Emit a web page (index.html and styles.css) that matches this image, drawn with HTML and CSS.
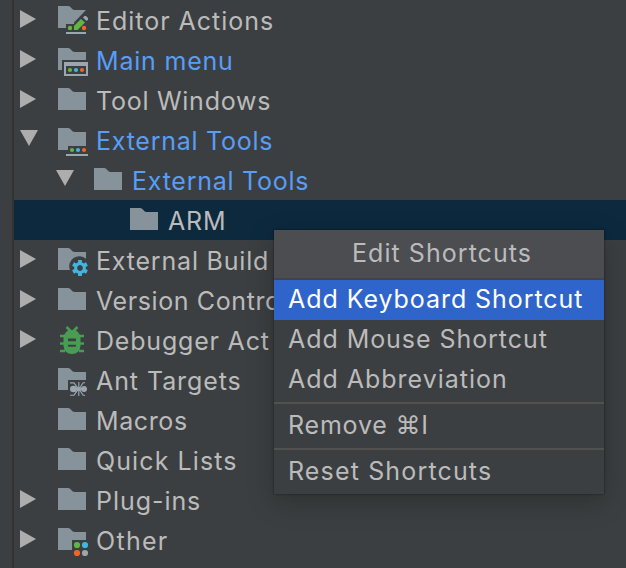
FILE: index.html
```html
<!DOCTYPE html>
<html lang="en">
<head>
<meta charset="utf-8">
<title>Keymap</title>
<link rel="stylesheet" href="styles.css">
</head>
<body>
<svg class="defs" width="0" height="0">
  <symbol id="folder" viewBox="0 0 36 36"><path fill="#87939a" d="M2 4H12Q14 4 15.5 6.3Q16.6 8 18.5 8H30V26H2Z"/></symbol>
  <symbol id="right" viewBox="0 0 18 18"><path fill="#adadad" d="M0 0L16 9L0 18Z"/></symbol>
  <symbol id="down" viewBox="0 0 18 18"><path fill="#adadad" d="M0 0H18L9 16Z"/></symbol>
</svg>
<main class="tree">
  <div class="row"><svg class="arrow"><use href="#right"/></svg>
    <svg class="icon" viewBox="0 0 36 36"><path fill="#87939a" d="M2 2H12Q14 2 15.5 4.3Q16.6 6 18.5 6H30L18 18.500V20H10V24H2Z"/><path fill="#62b543" d="M18 22L25 15L29 18.500L21.500 26H18Z"/><path fill="#9aa7b0" d="M27 13.500L28.500 12H30L32 14V15.500L30.500 17Z"/><circle cx="14" cy="24" r="2.200" fill="#62b543"/><circle cx="28" cy="24" r="2.200" fill="#f26522"/><path fill="#9aa7b0" d="M10 28h20v2H10z"/></svg>
    <span class="label t0">Editor Actions</span></div>
  <div class="row"><svg class="arrow"><use href="#right"/></svg>
    <svg class="icon" viewBox="0 0 36 36"><path fill="#87939a" d="M2 4H12Q14 4 15.5 6.3Q16.6 8 18.5 8H30V16H6V26H2Z"/><path fill="#9aa7b0" fill-rule="evenodd" d="M8 18H32V32H8ZM10 22V30H30V22Z"/><circle cx="14" cy="26" r="2.100" fill="#62b543"/><circle cx="20" cy="26" r="2.100" fill="#40b6e0"/><circle cx="26" cy="26" r="2.100" fill="#f26522"/></svg>
    <span class="label changed t1">Main menu</span></div>
  <div class="row"><svg class="arrow"><use href="#right"/></svg><svg class="icon"><use href="#folder"/></svg><span class="label t2">Tool Windows</span></div>
  <div class="row"><svg class="arrow"><use href="#down"/></svg>
    <svg class="icon" viewBox="0 0 36 36"><path fill="#87939a" d="M2 4H12Q14 4 15.5 6.3Q16.6 8 18.5 8H30V22H12V26H2Z"/><circle cx="16" cy="26" r="2.100" fill="#62b543"/><circle cx="22" cy="26" r="2.100" fill="#40b6e0"/><circle cx="28" cy="26" r="2.100" fill="#f26522"/><path fill="#9aa7b0" d="M10 30h22v2H10z"/></svg>
    <span class="label changed t3">External Tools</span></div>
  <div class="row level-1"><svg class="arrow"><use href="#down"/></svg><svg class="icon"><use href="#folder"/></svg><span class="label changed t3">External Tools</span></div>
  <div class="row level-2 selected"><span class="arrow"></span><svg class="icon"><use href="#folder"/></svg><span class="label t5">ARM</span></div>
  <div class="row"><svg class="arrow"><use href="#right"/></svg>
    <svg class="icon" viewBox="0 0 36 36"><path fill="#87939a" d="M2 4H12Q14 4 15.5 6.3Q16.6 8 18.5 8H30V14.800A10 10 0 0 0 14 26H2Z"/><g transform="translate(24 24)" fill="#40b6e0"><circle r="4.400" fill="none" stroke="#40b6e0" stroke-width="3"/><path id="tooth" d="M-1.900 -8H1.900V-5H-1.900Z"/><use href="#tooth" transform="rotate(60)"/><use href="#tooth" transform="rotate(120)"/><use href="#tooth" transform="rotate(180)"/><use href="#tooth" transform="rotate(240)"/><use href="#tooth" transform="rotate(300)"/></g></svg>
    <span class="label clipped t6">External Build</span></div>
  <div class="row"><svg class="arrow"><use href="#right"/></svg><svg class="icon"><use href="#folder"/></svg><span class="label clipped t7">Version Contro</span></div>
  <div class="row"><svg class="arrow"><use href="#right"/></svg>
    <svg class="icon" viewBox="0 0 36 36"><path fill="none" stroke="#499c54" stroke-width="2.600" d="M10.500 3L15 7.500M21.500 3L17 7.500M4 12H9M28 12H23M4 19.500H28M4 27H9M28 27H23"/><path fill="#499c54" fill-rule="evenodd" d="M9 10Q10 6 16 6Q22 6 23 10L24.500 11V22Q23.500 30 16 30Q8.500 30 7.500 22V11ZM12 14.500V17.200H20V14.500ZM12 20V22.700H20V20Z"/></svg>
    <span class="label clipped t8">Debugger Act</span></div>
  <div class="row"><span class="arrow"></span>
    <svg class="icon" viewBox="0 0 36 36"><path fill="#87939a" d="M2 4H12Q14 4 15.5 6.3Q16.6 8 18.5 8H30V16H12V26H2Z"/><g fill="#9aa7b0"><ellipse cx="17.500" cy="25" rx="3.500" ry="3.300"/><ellipse cx="28" cy="25" rx="3" ry="2.900"/><ellipse cx="23" cy="25" rx="3" ry="1.700"/></g><path fill="none" stroke="#9aa7b0" stroke-width="1.150" d="M14 18.800H18L22.500 25L18 31.200H14M22.800 25V18M22.800 25V32M23 25L27 19L29 18.500M23 25L27 31L29 31.500"/></svg>
    <span class="label t9">Ant Targets</span></div>
  <div class="row"><span class="arrow"></span><svg class="icon"><use href="#folder"/></svg><span class="label t10">Macros</span></div>
  <div class="row"><span class="arrow"></span><svg class="icon"><use href="#folder"/></svg><span class="label t11">Quick Lists</span></div>
  <div class="row"><svg class="arrow"><use href="#right"/></svg><svg class="icon"><use href="#folder"/></svg><span class="label t12">Plug-ins</span></div>
  <div class="row"><svg class="arrow"><use href="#right"/></svg>
    <svg class="icon" viewBox="0 0 36 36"><path fill="#87939a" d="M2 4H12Q14 4 15.5 6.3Q16.6 8 18.5 8H30V16H16V26H2Z"/><circle cx="21" cy="21" r="3.100" fill="#62b543"/><circle cx="29" cy="21" r="3.100" fill="#40b6e0"/><circle cx="21" cy="29" r="3.100" fill="#f26522"/><circle cx="29" cy="29" r="3.100" fill="#9aa7b0"/></svg>
    <span class="label t13">Other</span></div>
</main>
<div class="menu">
  <div class="title"><span class="m0">Edit Shortcuts</span></div>
  <div class="item active"><span class="m1">Add Keyboard Shortcut</span></div>
  <div class="item"><span class="m2">Add Mouse Shortcut</span></div>
  <div class="item"><span class="m3">Add Abbreviation</span></div>
  <div class="separator"></div>
  <div class="item"><span class="m4">Remove ⌘I</span></div>
  <div class="separator"></div>
  <div class="item"><span class="m5">Reset Shortcuts</span></div>
</div>
</body>
</html>
```
FILE: styles.css
```css
* { box-sizing: border-box; }
body {
  margin: 0;
  width: 626px;
  height: 568px;
  overflow: hidden;
  background: #3c3f41;
  color: #bbbbbb;
  font: 25px/40px Inter, "Liberation Sans", sans-serif;
  letter-spacing: 0.8px;
}
.defs { display: block; }
.tree {
  margin-left: 12px;
  height: 568px;
  border-left: 2px solid #353332;
  overflow: hidden;
}
.row {
  display: flex;
  height: 40px;
  padding-left: 6px;
  white-space: nowrap;
}
.level-1 { padding-left: 42px; }
.level-2 { padding-left: 78px; }
.selected { background: #0d293e; }
.arrow { flex: none; width: 18px; height: 18px; margin: 10px 18px 0 0; }
.icon { flex: none; width: 36px; height: 36px; margin: 4px 4px 0 0; }
.label { padding-top: 1px; }
.clipped { width: 178px; overflow: hidden; }
.changed { color: #589df6; }
.t0 { letter-spacing: 0.97px; }
.t2, .t3 { letter-spacing: 0.74px; }
.t7 { letter-spacing: 0.6px; }
.t9 { letter-spacing: 0.92px; }
.t10 { letter-spacing: 0.6px; }
.t11 { letter-spacing: 1.1px; }
.t12 { letter-spacing: 0.95px; }
.t13 { letter-spacing: 1.3px; }
.menu {
  position: absolute;
  left: 274px;
  top: 230px;
  width: 330px;
  height: 264px;
  background: #3c3f41;
  box-shadow: 0 0 2px rgba(0,0,0,.55), 0 8px 26px rgba(0,0,0,.24);
  white-space: nowrap;
}
.title {
  height: 50px;
  padding: 3px 0 0 6px;
  background: #4b4d51;
  border-bottom: 2px solid #414345;
  text-align: center;
}
.item { height: 40px; padding-left: 14px; line-height: 38px; }
.active { background: #2f65ca; color: #fff; }
.separator { height: 6px; padding: 2px 0; background: #515151 content-box; }
.m0 { letter-spacing: 1.05px; }
.m1, .m2 { letter-spacing: 0.94px; }
.m3 { letter-spacing: 0.98px; }
.m5 { letter-spacing: 1.15px; }
```
